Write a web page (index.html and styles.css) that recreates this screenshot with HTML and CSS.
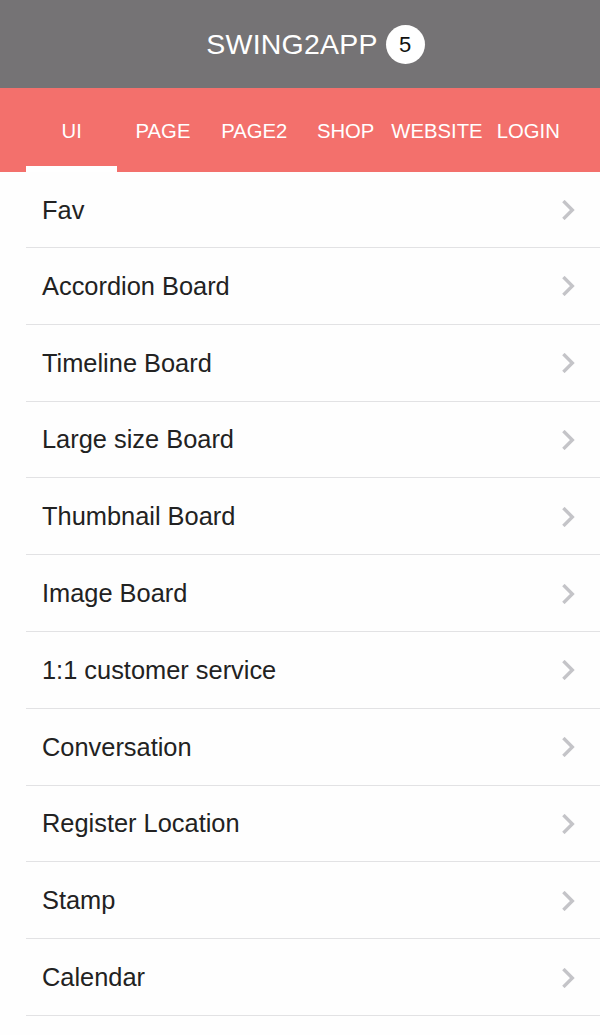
FILE: index.html
```html
<!DOCTYPE html>
<html>
<head>
<meta charset="utf-8">
<link rel="stylesheet" href="styles.css">
</head>
<body>
<div class="app">
  <header class="topbar">
    <span class="title">SWING2APP</span>
    <span class="badge">5</span>
  </header>
  <nav class="tabs">
    <div class="tab active">UI</div>
    <div class="tab">PAGE</div>
    <div class="tab">PAGE2</div>
    <div class="tab">SHOP</div>
    <div class="tab">WEBSITE</div>
    <div class="tab">LOGIN</div>
  </nav>
  <ul class="list">
    <li class="item"><span>Fav</span><svg class="chev" viewBox="0 0 12 18"><path d="M2 2 L9 9 L2 16" /></svg></li>
    <li class="item"><span>Accordion Board</span><svg class="chev" viewBox="0 0 12 18"><path d="M2 2 L9 9 L2 16" /></svg></li>
    <li class="item"><span>Timeline Board</span><svg class="chev" viewBox="0 0 12 18"><path d="M2 2 L9 9 L2 16" /></svg></li>
    <li class="item"><span>Large size Board</span><svg class="chev" viewBox="0 0 12 18"><path d="M2 2 L9 9 L2 16" /></svg></li>
    <li class="item"><span>Thumbnail Board</span><svg class="chev" viewBox="0 0 12 18"><path d="M2 2 L9 9 L2 16" /></svg></li>
    <li class="item"><span>Image Board</span><svg class="chev" viewBox="0 0 12 18"><path d="M2 2 L9 9 L2 16" /></svg></li>
    <li class="item"><span>1:1 customer service</span><svg class="chev" viewBox="0 0 12 18"><path d="M2 2 L9 9 L2 16" /></svg></li>
    <li class="item"><span>Conversation</span><svg class="chev" viewBox="0 0 12 18"><path d="M2 2 L9 9 L2 16" /></svg></li>
    <li class="item"><span>Register Location</span><svg class="chev" viewBox="0 0 12 18"><path d="M2 2 L9 9 L2 16" /></svg></li>
    <li class="item"><span>Stamp</span><svg class="chev" viewBox="0 0 12 18"><path d="M2 2 L9 9 L2 16" /></svg></li>
    <li class="item"><span>Calendar</span><svg class="chev" viewBox="0 0 12 18"><path d="M2 2 L9 9 L2 16" /></svg></li>
  </ul>
</div>
</body>
</html>
```
FILE: styles.css
```css
* { box-sizing: border-box; }
html, body {
  margin: 0;
  padding: 0;
  background: #ffffff;
  font-family: "Liberation Sans", Arial, sans-serif;
}
.app {
  width: 600px;
  height: 1035px;
  overflow: hidden;
  background: #fefefe;
}
.topbar {
  height: 88px;
  background: #757375;
  display: flex;
  align-items: center;
  justify-content: center;
  gap: 8px;
  padding-left: 31px;
}
.title {
  color: #ffffff;
  font-size: 28.5px;
  letter-spacing: 0.2px;
}
.badge {
  width: 39px;
  height: 39px;
  border-radius: 50%;
  background: #ffffff;
  color: #111111;
  font-size: 22px;
  display: flex;
  align-items: center;
  justify-content: center;
  margin-top: 1px;
}
.tabs {
  height: 84px;
  background: #f3706c;
  display: grid;
  grid-template-columns: repeat(6, 1fr);
  padding: 0 26px;
}
.tab {
  color: #ffffff;
  font-size: 20.3px;
  display: flex;
  align-items: center;
  justify-content: center;
  padding-top: 3px;
  white-space: nowrap;
}
.tab.active {
  border-bottom: 6px solid #ffffff;
  padding-top: 9px;
}
.list {
  list-style: none;
  margin: 0;
  padding: 0 0 0 26px;
}
.item {
  height: 76.8px;
  border-bottom: 1px solid #e2e2e4;
  display: flex;
  align-items: center;
  justify-content: space-between;
  padding: 1px 24px 0 16px;
  font-size: 25.4px;
  color: #222222;
}
.item:first-child {
  height: 76px;
}
.chev {
  width: 14px;
  height: 20px;
  fill: none;
  stroke: #c4c4c8;
  stroke-width: 3;
  stroke-linecap: square;
}
```
